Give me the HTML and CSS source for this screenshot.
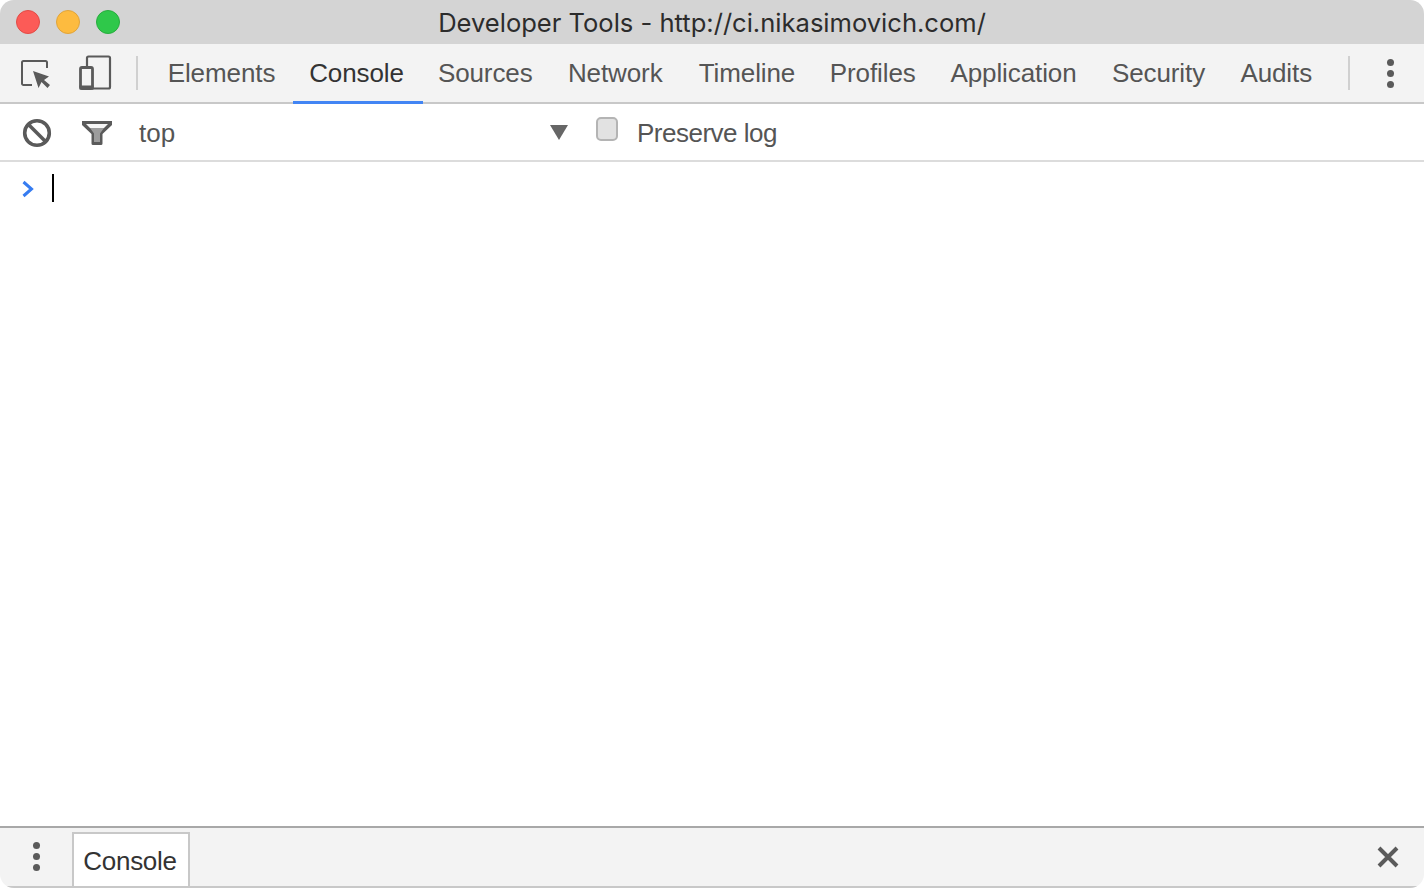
FILE: index.html
```html
<!DOCTYPE html>
<html lang="en">
<head>
<meta charset="utf-8">
<title>Developer Tools - http://ci.nikasimovich.com/</title>
<link rel="stylesheet" href="styles.css">
</head>
<body>
<div class="window">
  <header class="titlebar">
    <div class="lights">
      <span class="light red"></span>
      <span class="light yellow"></span>
      <span class="light green"></span>
    </div>
    <div class="title">Developer Tools - http://ci.nikasimovich.com/</div>
  </header>

  <nav class="maintabs">
    <svg class="ic-inspect" width="32" height="32" viewBox="0 0 32 32">
      <path d="M12 28H3.500A1.500 1.500 0 0 1 2 26.500V5.500A1.500 1.500 0 0 1 3.500 4h22A1.500 1.500 0 0 1 27 5.500V11" fill="none" stroke="#5a5a5a" stroke-width="2"/>
      <path d="M13 14l16 5.500-5 3.500 6 5-2.500 3-6-6-3 6z" fill="#5a5a5a"/>
    </svg>
    <svg class="ic-device" width="34" height="36" viewBox="0 0 34 36">
      <path d="M9 11V3A1.500 1.500 0 0 1 10.500 1.500h20A1.500 1.500 0 0 1 32 3v29a1.500 1.500 0 0 1-1.500 1.500H14" fill="none" stroke="#5a5a5a" stroke-width="2.200"/>
      <rect x="2.500" y="12.500" width="12" height="21" rx="1.500" fill="none" stroke="#5a5a5a" stroke-width="2.800"/>
      <rect x="1.500" y="30.500" width="14" height="4" fill="#5a5a5a"/>
    </svg>
    <span class="vsep first"></span>
    <div class="tabs">
      <a class="tab">Elements</a>
      <a class="tab active">Console</a>
      <a class="tab">Sources</a>
      <a class="tab">Network</a>
      <a class="tab">Timeline</a>
      <a class="tab">Profiles</a>
      <a class="tab">Application</a>
      <a class="tab">Security</a>
      <a class="tab">Audits</a>
    </div>
    <span class="vsep last"></span>
    <span class="dots main"><i></i><i></i><i></i></span>
  </nav>

  <section class="consolebar">
    <svg class="ic-clear" width="30" height="30" viewBox="0 0 30 30">
      <circle cx="15" cy="15" r="12.300" fill="none" stroke="#5a5a5a" stroke-width="3.600"/>
      <path d="M6.500 6.500l17 17" stroke="#5a5a5a" stroke-width="3.600"/>
    </svg>
    <svg class="ic-filter" width="32" height="28" viewBox="0 0 32 28">
      <path d="M1 2h30v4L21.500 15v9.500a1.500 1.500 0 0 1-1.500 1.500h-8a1.500 1.500 0 0 1-1.500-1.500V15L1 6z" fill="#5a5a5a"/>
      <path d="M5 5h22l-4 4H9z" fill="#f6f6f6"/>
      <path d="M9 9h14l-4 5.500V23h-6v-8.500z" fill="#9c9c9c"/>
    </svg>
    <div class="context">top</div>
    <span class="arrow"></span>
    <span class="checkbox"></span>
    <label class="preserve">Preserve log</label>
  </section>

  <main class="prompt">
    <svg class="ic-prompt" width="14" height="18" viewBox="0 0 14 18">
      <path d="M2.500 2l8 7-8 7" fill="none" stroke="#367cf1" stroke-width="3"/>
    </svg>
    <span class="caret"></span>
  </main>

  <footer class="drawer">
    <span class="dots drawer-dots"><i></i><i></i><i></i></span>
    <div class="drawer-tab">Console</div>
    <svg class="ic-close" width="24" height="24" viewBox="0 0 24 24">
      <path d="M3 3l18 18M21 3L3 21" stroke="#5a5a5a" stroke-width="4"/>
    </svg>
  </footer>
</div>
</body>
</html>
```

FILE: styles.css
```css
* { box-sizing: border-box; }
html, body { margin: 0; height: 100%; background: #fff; }
body { font-family: "Liberation Sans", Arial, sans-serif; overflow: hidden; }

.window {
  width: 1424px;
  height: 888px;
  display: flex;
  flex-direction: column;
  border-radius: 14px;
  overflow: hidden;
  background: #fff;
}

.titlebar {
  height: 44px;
  flex: none;
  background: #d4d4d4;
  display: flex;
  align-items: center;
  position: relative;
}
.lights { display: flex; gap: 16px; padding-left: 16px; }
.light {
  width: 24px;
  height: 24px;
  border-radius: 50%;
  border: 1px solid;
}
.red { background: #fc5b57; border-color: #e24b46; }
.yellow { background: #fdbb3f; border-color: #e0a43a; }
.green { background: #2fc84a; border-color: #28ac3e; }
.title {
  position: absolute;
  left: 0;
  right: 0;
  top: 7px;
  text-align: center;
  font-family: Inter, "Liberation Sans", sans-serif;
  font-size: 25.560px;
  line-height: 32px;
  color: #2c2c2c;
}

.maintabs {
  height: 60px;
  flex: none;
  background: #f3f3f3;
  border-bottom: 2px solid #c8c8c8;
  display: flex;
  align-items: center;
}
.ic-inspect { margin-left: 20px; flex: none; }
.ic-device { margin-left: 26px; flex: none; }
.vsep { width: 2px; height: 34px; background: #d0d0d0; flex: none; }
.vsep.first { margin-left: 24px; }
.vsep.last { margin-left: 18px; }
.tabs {
  display: grid;
  grid-template-columns: 141px 129px 128.500px 131.500px 132px 119.500px 162px 128px 107.500px;
  height: 100%;
  margin-left: 13px;
}
.tab {
  display: flex;
  align-items: center;
  justify-content: center;
  padding-top: 1px;
  font-size: 26px;
  letter-spacing: -0.100px;
  color: #555;
  position: relative;
}
.tab.active { color: #333; }
.tab.active::after {
  content: "";
  position: absolute;
  left: 1px;
  right: -2px;
  bottom: -2px;
  height: 3px;
  background: #4285f4;
}

.dots { display: flex; flex-direction: column; gap: 4px; flex: none; }
.dots i { display: block; width: 7px; height: 7px; border-radius: 50%; background: #5a5a5a; }
.dots.main { margin-left: 37px; }

.consolebar {
  height: 58px;
  flex: none;
  border-bottom: 2px solid #dcdcdc;
  display: flex;
  align-items: center;
  background: #fff;
}
.ic-clear { margin-left: 22px; margin-top: 2px; flex: none; }
.ic-filter { margin-left: 29px; margin-top: 2px; flex: none; }
.context { font-size: 26px; color: #555; margin-left: 26px; width: 411px; padding-top: 2px; }
.arrow {
  width: 0;
  height: 0;
  border-left: 9px solid transparent;
  border-right: 9px solid transparent;
  border-top: 15px solid #666;
  flex: none;
}
.checkbox {
  width: 22px;
  height: 24px;
  margin-left: 28px;
  margin-top: -6px;
  border-radius: 5px;
  background: #e2e2e2;
  border: 2px solid #b4b4b4;
  flex: none;
}
.preserve { font-size: 26px; letter-spacing: -0.500px; color: #555; margin-left: 19px; padding-top: 2px; }

.prompt {
  flex: 1;
  display: flex;
  align-items: flex-start;
  padding: 12px 0 0 21px;
  background: #fff;
}
.ic-prompt { margin-top: 6px; flex: none; }
.caret { width: 2px; height: 28px; background: #000; margin-left: 17px; flex: none; }

.drawer {
  height: 62px;
  flex: none;
  background: #f3f3f3;
  border-top: 2px solid #a8a8a8;
  border-bottom: 2px solid #c8c8c8;
  display: flex;
  align-items: flex-end;
}
.drawer-dots { margin-left: 33px; align-self: flex-start; margin-top: 14px; }
.drawer-tab {
  margin-left: 32px;
  width: 118px;
  height: 54px;
  background: #fff;
  border: 2px solid #c8c8c8;
  border-bottom: 0;
  font-size: 26px;
  letter-spacing: -0.300px;
  color: #333;
  display: flex;
  align-items: center;
  justify-content: center;
  padding: 3px 2px 0 0;
}
.ic-close { margin-left: auto; margin-right: 24px; align-self: flex-start; margin-top: 17px; flex: none; }
```
